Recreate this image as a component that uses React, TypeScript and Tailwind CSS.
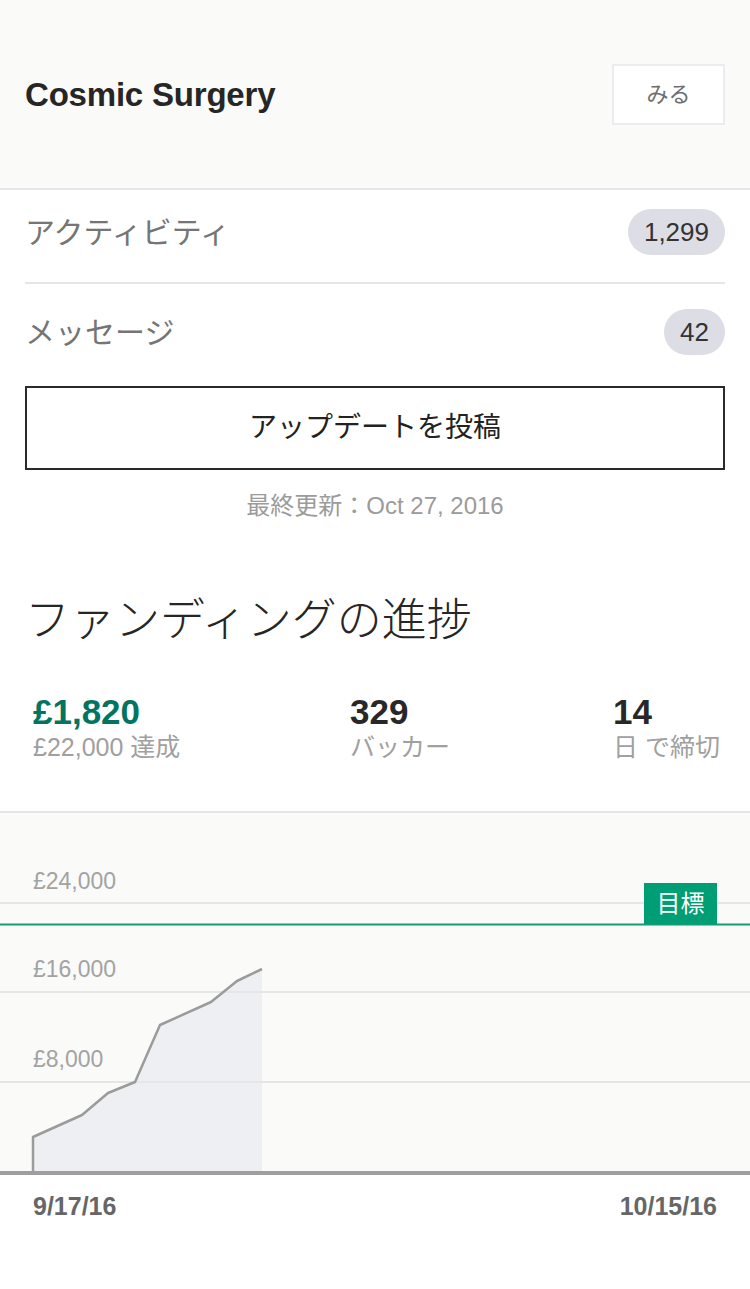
import React from "react";

const FONT = { fontFamily: '"Liberation Sans", "Noto Sans CJK JP", sans-serif' };

function Chart() {
  const pts: [number, number][] = [
    [33, 358],
    [33, 324],
    [82, 302],
    [108, 280],
    [135, 269],
    [160, 212],
    [211, 189],
    [237, 168],
    [262, 156],
  ];
  const line = pts.map((p, i) => `${i === 0 ? "M" : "L"}${p[0]} ${p[1]}`).join(" ");
  const area = `${line} L262 358 Z`;
  return (
    <div className="relative h-[358px] bg-[#fafaf9]">
      <svg className="absolute inset-0" width="750" height="358" viewBox="0 0 750 358">
        <path d={area} fill="#eeeff2" />
        <line x1="0" y1="90" x2="750" y2="90" stroke="#e6e6e6" strokeWidth="2" />
        <line x1="0" y1="179" x2="750" y2="179" stroke="#e6e6e6" strokeWidth="2" />
        <line x1="0" y1="269" x2="750" y2="269" stroke="#e6e6e6" strokeWidth="2" />
        <line x1="0" y1="111.5" x2="750" y2="111.5" stroke="#0f9d74" strokeWidth="2" />
        <path d={line} fill="none" stroke="#9b9b9b" strokeWidth="2.5" strokeLinejoin="round" />
      </svg>
      <div className="absolute left-[33px] top-[54px] text-[23px] leading-[28px] text-[#a3a3a3]">£24,000</div>
      <div className="absolute left-[33px] top-[142px] text-[23px] leading-[28px] text-[#a3a3a3]">£16,000</div>
      <div className="absolute left-[33px] top-[232px] text-[23px] leading-[28px] text-[#a3a3a3]">£8,000</div>
      <div className="absolute left-[644px] top-[70px] flex h-[41px] w-[73px] items-center justify-center bg-[#009e74] text-[24px] text-white">
        目標
      </div>
    </div>
  );
}

export default function App() {
  return (
    <div className="min-h-[1289px] w-[750px] bg-white" style={FONT}>
      <header className="flex h-[190px] items-center justify-between border-b-2 border-[#e8e8ea] bg-[#fafaf8] px-[25px]">
        <h1 className="text-[33px] font-bold leading-none tracking-[-0.2px] text-[#262626]">Cosmic Surgery</h1>
        <button className="flex h-[61px] w-[113px] items-center justify-center border-2 border-[#ececf0] bg-white text-[22px] text-[#6e6e6e]">
          みる
        </button>
      </header>

      <div className="px-[25px]">
        <div className="flex h-[94px] items-center justify-between border-b-2 border-[#e6e6e6] pb-[8px]">
          <span className="text-[30px] text-[#757575]">アクティビティ</span>
          <span className="flex h-[46px] items-center rounded-full bg-[#dcdde5] px-[16px] text-[26px] text-[#333]">1,299</span>
        </div>
        <div className="flex h-[102px] items-center justify-between pb-[6px]">
          <span className="text-[30px] text-[#757575]">メッセージ</span>
          <span className="flex h-[46px] items-center rounded-full bg-[#dcdde5] px-[16px] text-[26px] text-[#333]">42</span>
        </div>
        <button className="flex h-[84px] w-full items-center justify-center border-2 border-[#2a2a2a] text-[28px] text-[#222]">
          アップデートを投稿
        </button>
        <div className="mt-[21px] text-center text-[24px] leading-[30px] text-[#9b9b9b]">最終更新：Oct 27, 2016</div>
        <h2 className="mt-[72px] text-[45px] font-light leading-[56px] text-[#262626]">ファンディングの進捗</h2>
      </div>

      <div className="mt-[44px] flex pb-[48px] pl-[33px]">
        <div className="w-[317px] shrink-0">
          <div className="text-[35px] font-bold leading-[38px] text-[#037362]">£1,820</div>
          <div className="whitespace-nowrap text-[25px] leading-[32px] text-[#a0a0a0]">£22,000 達成</div>
        </div>
        <div className="w-[263px] shrink-0">
          <div className="text-[35px] font-bold leading-[38px] text-[#282828]">329</div>
          <div className="whitespace-nowrap text-[25px] leading-[32px] text-[#a0a0a0]">バッカー</div>
        </div>
        <div className="flex-1">
          <div className="text-[35px] font-bold leading-[38px] text-[#282828]">14</div>
          <div className="whitespace-nowrap text-[25px] leading-[32px] text-[#a0a0a0]">日 で締切</div>
        </div>
      </div>

      <div className="border-t-2 border-[#e6e6e6]">
        <Chart />
        <div className="h-[4px] bg-[#9e9e9e]" />
        <div className="flex justify-between px-[33px] pt-[16px] text-[25px] font-bold leading-[30px] text-[#666]">
          <span>9/17/16</span>
          <span>10/15/16</span>
        </div>
      </div>
    </div>
  );
}
